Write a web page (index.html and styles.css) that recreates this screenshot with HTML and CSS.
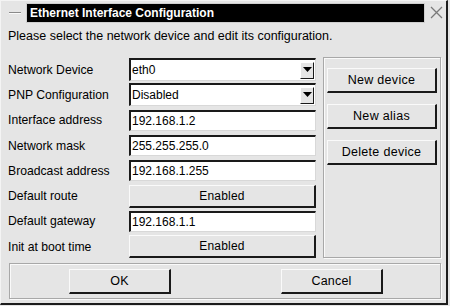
FILE: index.html
```html
<!DOCTYPE html>
<html>
<head>
<meta charset="utf-8">
<link rel="stylesheet" href="styles.css">
</head>
<body>
<div class="window">
  <div class="titlebar">
    <div class="menu-btn"><span class="minus"></span></div>
    <div class="title">Ethernet Interface Configuration</div>
    <div class="close-btn">
      <svg width="13" height="13" viewBox="0 0 13 13"><path d="M1 1 L12 12 M12 1 L1 12" stroke="#7a7a7a" stroke-width="1.3" fill="none"/></svg>
    </div>
  </div>
  <div class="desc">Please select the network device and edit its configuration.</div>
  <div class="main">
    <div class="form">
      <div class="label">Network Device</div>
      <div class="combo"><span class="val">eth0</span><span class="arrow"><svg width="9" height="6" viewBox="0 0 9 6"><path d="M0 0 H9 L4.5 5 Z" fill="#000"/></svg></span></div>
      <div class="label">PNP Configuration</div>
      <div class="combo"><span class="val">Disabled</span><span class="arrow"><svg width="9" height="6" viewBox="0 0 9 6"><path d="M0 0 H9 L4.5 5 Z" fill="#000"/></svg></span></div>
      <div class="label">Interface address</div>
      <div class="input">192.168.1.2</div>
      <div class="label">Network mask</div>
      <div class="input">255.255.255.0</div>
      <div class="label">Broadcast address</div>
      <div class="input">192.168.1.255</div>
      <div class="label">Default route</div>
      <div class="btn wide">Enabled</div>
      <div class="label">Default gateway</div>
      <div class="input">192.168.1.1</div>
      <div class="label">Init at boot time</div>
      <div class="btn wide">Enabled</div>
    </div>
    <div class="side">
      <div class="btn side-btn">New device</div>
      <div class="btn side-btn">New alias</div>
      <div class="btn side-btn">Delete device</div>
    </div>
  </div>
  <div class="bottom">
    <div class="btn action">OK</div>
    <div class="btn action">Cancel</div>
  </div>
</div>
</body>
</html>
```

FILE: styles.css
```css
* { box-sizing: border-box; }
html, body {
  margin: 0;
  padding: 0;
  background: #e5e5e5;
}
body {
  font-family: "Liberation Sans", Arial, Helvetica, sans-serif;
  font-size: 12px;
  color: #000;
}
.window {
  width: 448px;
  height: 305px;
  border-right: 2px solid #1c1c1c;
  border-bottom: 2px solid #1c1c1c;
  border-left: 1px solid #f4f4f4;
  border-top: 1px solid #f4f4f4;
  background: #e5e5e5;
  position: relative;
}
.titlebar {
  display: flex;
  align-items: center;
  height: 21px;
  padding-top: 2px;
}
.menu-btn {
  width: 26px;
  height: 18px;
  display: flex;
  align-items: center;
  padding-left: 8px;
}
.minus {
  display: block;
  width: 12px;
  height: 2px;
  background: #8a8a8a;
  border-bottom: 1px solid #fafafa;
  margin-top: 1px;
}
.title {
  width: 397px;
  height: 18px;
  background: #000;
  color: #fff;
  font-weight: bold;
  font-size: 12px;
  line-height: 18px;
  padding-left: 3px;
  outline: 1px solid #cfcfcf;
}
.close-btn {
  width: 22px;
  height: 18px;
  display: flex;
  align-items: center;
  justify-content: center;
  padding-left: 3px;
}
.desc {
  margin-top: 7px;
  padding-left: 7px;
  line-height: 14px;
  height: 14px;
  font-size: 12.5px;
}
.main {
  display: flex;
  margin-top: 14px;
  padding-left: 7px;
}
.form {
  display: grid;
  grid-template-columns: 121px 187px;
  grid-auto-rows: 25.3px;
  align-items: center;
}
.label {
  line-height: 14px;
  font-size: 12.2px;
}
.input, .combo {
  height: 21px;
  background: #fff;
  border-top: 2px solid #1a1a1a;
  border-left: 2px solid #1a1a1a;
  border-right: 1px solid #d8d8d8;
  border-bottom: 1px solid #d8d8d8;
  line-height: 18px;
  padding-left: 1px;
  white-space: nowrap;
}
.combo {
  height: 23px;
  display: flex;
  align-items: center;
  justify-content: space-between;
  padding-right: 1px;
}
.combo .val { line-height: 18px; }
.arrow {
  width: 14px;
  height: 17px;
  background: #e5e5e5;
  border-top: 1px solid #fff;
  border-left: 1px solid #fff;
  border-right: 1px solid #1a1a1a;
  border-bottom: 1px solid #1a1a1a;
  display: flex;
  align-items: center;
  justify-content: center;
}
.btn {
  background: #e5e5e5;
  border-top: 1px solid #fafafa;
  border-left: 1px solid #fafafa;
  border-right: 2px solid #1a1a1a;
  border-bottom: 2px solid #1a1a1a;
  display: flex;
  align-items: center;
  justify-content: center;
  white-space: nowrap;
  letter-spacing: 0.2px;
}
.wide {
  height: 23px;
}
.side {
  width: 118px;
  height: 201px;
  margin-left: 7px;
  margin-top: 0;
  border: 1px solid #a8a8a8;
  box-shadow: inset 1px 1px 0 #fafafa, 1px 1px 0 #fafafa;
  padding: 10px 3px 0 3px;
  display: flex;
  flex-direction: column;
  gap: 11px;
}
.side-btn {
  height: 25px;
  font-size: 12.5px;
  letter-spacing: 0.3px;
}
.bottom {
  margin-top: 4px;
  margin-left: 8px;
  width: 432px;
  height: 36px;
  border: 1px solid #a8a8a8;
  box-shadow: inset 1px 1px 0 #fafafa, 1px 1px 0 #fafafa;
  display: flex;
  align-items: center;
  padding-left: 59px;
  gap: 110px;
}
.action {
  width: 102px;
  height: 25px;
  font-size: 12.5px;
}
```
